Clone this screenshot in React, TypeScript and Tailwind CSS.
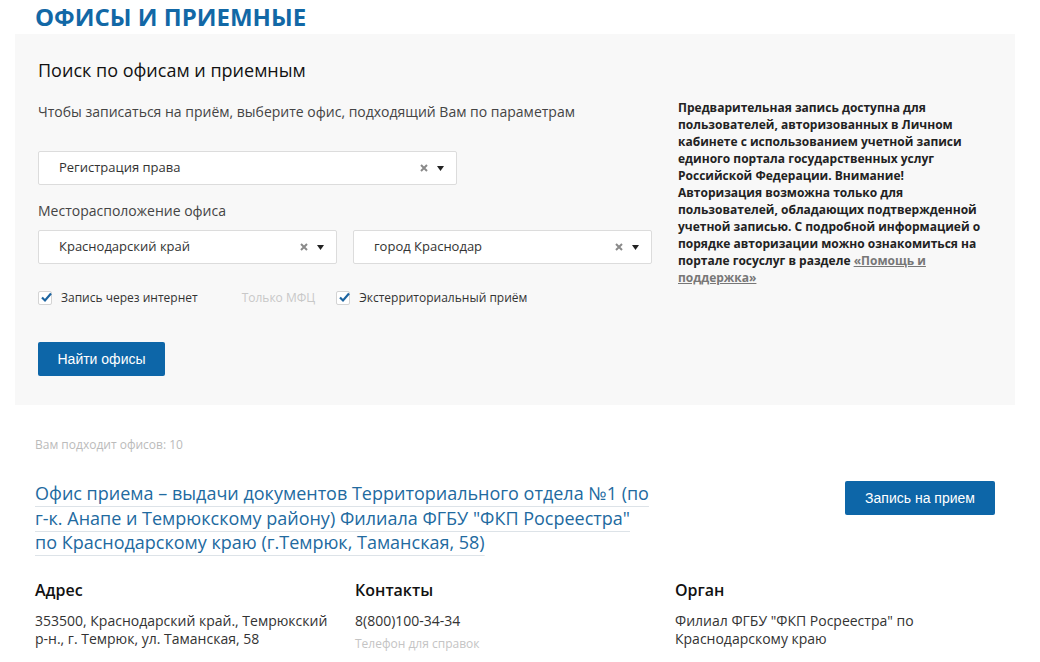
import React from "react";

const font = { fontFamily: '"Open Sans", "Noto Sans", sans-serif' };

function Select({ value, className }: { value: string; className: string }) {
  return (
    <div
      className={`flex h-[34px] items-center justify-between rounded-[2px] border border-[#dcdcdc] bg-white pl-[20px] pr-[12px] ${className}`}
    >
      <span className="text-[13px] text-[#333]">{value}</span>
      <span className="flex items-center gap-[9px]">
        <svg width="8" height="8" viewBox="0 0 8 8">
          <path d="M1 1L7 7M7 1L1 7" stroke="#8a8a8a" strokeWidth="2" />
        </svg>
        <svg width="7" height="5" viewBox="0 0 7 5">
          <path d="M0 0H7L3.5 5Z" fill="#222" />
        </svg>
      </span>
    </div>
  );
}

function Check({ label }: { label: string }) {
  return (
    <label className="flex items-center gap-[9px]">
      <span className="relative h-[14px] w-[14px] rounded-[2px] border border-[#d4d4d4] bg-white">
        <svg className="absolute left-[1px] top-[-1px]" width="13" height="13" viewBox="0 0 13 13">
          <path d="M2 6.5L5 9.5L11 2.5" stroke="#1c64a0" strokeWidth="2.2" fill="none" />
        </svg>
      </span>
      <span className="text-[12px] text-[#333]">{label}</span>
    </label>
  );
}

export default function App() {
  return (
    <div className="min-h-[662px] w-[1040px] bg-white" style={font}>
      <div className="ml-[15px] w-[1000px]">
        <h1 className="h-[34px] pl-[20px] text-[24px] font-bold leading-[34px] text-[#1268a6]">
          ОФИСЫ И ПРИЕМНЫЕ
        </h1>

        <div className="flex bg-[#f8f8f8] pb-[29px] pl-[23px] pt-[24px]">
          <div className="w-[614px]">
            <h2 className="text-[18px] leading-[24px] text-[#111]">Поиск по офисам и приемным</h2>
            <p className="mt-[20px] text-[14px] leading-[20px] text-[#444]">
              Чтобы записаться на приём, выберите офис, подходящий Вам по параметрам
            </p>
            <Select value="Регистрация права" className="mt-[29px] w-[419px]" />
            <div className="mt-[16px] text-[14px] leading-[20px] text-[#444]">
              Месторасположение офиса
            </div>
            <div className="mt-[9px] flex gap-[16px]">
              <Select value="Краснодарский край" className="w-[299px]" />
              <Select value="город Краснодар" className="w-[299px]" />
            </div>
            <div className="mt-[24px] flex h-[20px] items-center">
              <Check label="Запись через интернет" />
              <span className="ml-[44px] text-[12px] text-[#c8c8c8]">Только МФЦ</span>
              <span className="ml-[21px]">
                <Check label="Экстерриториальный приём" />
              </span>
            </div>
            <button
              className="mt-[34px] h-[34px] w-[127px] rounded-[2px] bg-[#0d66a8] text-[14px] text-white"
              style={{ fontFamily: '"Liberation Sans", Arial, sans-serif' }}
            >
              Найти офисы
            </button>
          </div>
          <div className="ml-[26px] mt-[41px] w-[307px] text-[12px] font-bold leading-[17px] text-[#222]">
            Предварительная запись доступна для пользователей, авторизованных в Личном кабинете с
            использованием учетной записи единого портала государственных услуг Российской
            Федерации. Внимание! Авторизация возможна только для пользователей, обладающих
            подтвержденной учетной записью. С подробной информацией о порядке авторизации можно
            ознакомиться на портале госуслуг в разделе{" "}
            <a className="text-[#777] underline">«Помощь и поддержка»</a>
          </div>
        </div>

        <div className="px-[20px]">
          <div className="mt-[31px] text-[12px] leading-[17px] text-[#bbb]">
            Вам подходит офисов: 10
          </div>
          <div className="mt-[28px] flex items-start justify-between">
            <div className="w-[615px] text-[18px] leading-[24.5px] text-[#226a9f] underline decoration-[#dde3e8] underline-offset-[6px]">
              Офис приема – выдачи документов Территориального отдела №1 (по г-к. Анапе и
              Темрюкскому району) Филиала ФГБУ "ФКП Росреестра" по Краснодарскому краю
              (г.Темрюк, Таманская, 58)
            </div>
            <button
              className="h-[34px] w-[150px] rounded-[2px] bg-[#0d66a8] text-[14px] text-white"
              style={{ fontFamily: '"Liberation Sans", Arial, sans-serif' }}
            >
              Запись на прием
            </button>
          </div>
          <div className="mt-[24px] grid grid-cols-[320px_320px_320px]">
            <div>
              <div className="text-[16px] font-semibold leading-[22px] text-[#111]">Адрес</div>
              <div className="mt-[11px] w-[300px] text-[14px] leading-[18px] text-[#333]">
                353500, Краснодарский край., Темрюкский р-н., г. Темрюк, ул. Таманская, 58
              </div>
            </div>
            <div>
              <div className="text-[16px] font-semibold leading-[22px] text-[#111]">Контакты</div>
              <div className="mt-[11px] text-[14px] leading-[18px] text-[#333]">8(800)100-34-34</div>
              <div className="mt-[5px] text-[12px] leading-[17px] text-[#c4c4c4]">
                Телефон для справок
              </div>
            </div>
            <div>
              <div className="text-[16px] font-semibold leading-[22px] text-[#111]">Орган</div>
              <div className="mt-[11px] w-[260px] text-[14px] leading-[18px] text-[#333]">
                Филиал ФГБУ "ФКП Росреестра" по Краснодарскому краю
              </div>
            </div>
          </div>
        </div>
      </div>
    </div>
  );
}
